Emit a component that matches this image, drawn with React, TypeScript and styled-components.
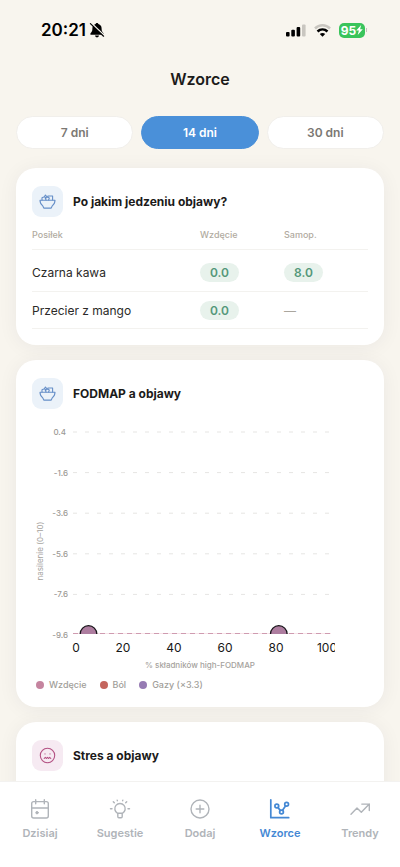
import React, { useState } from "react";
import styled, { createGlobalStyle } from "styled-components";

const GlobalStyle = createGlobalStyle`
  *, *::before, *::after { box-sizing: border-box; }
  body {
    margin: 0;
    background: #f8f5ee;
    color: #1c1b1a;
    font-family: Inter, "Liberation Sans", sans-serif;
    -webkit-font-smoothing: antialiased;
  }
  button { font: inherit; }
`;

const Screen = styled.div`
  display: flex;
  flex-direction: column;
  height: 100vh;
  overflow: hidden;
`;

const StatusBar = styled.div`
  display: flex;
  flex: none;
  align-items: center;
  justify-content: space-between;
  height: 60px;
  padding: 0 33px 0 41px;
  color: #000;
`;

const Clock = styled.div`
  display: flex;
  align-items: center;
  gap: 3px;
  font-size: 17px;
  font-weight: 600;
`;

const StatusIcons = styled.div`
  display: flex;
  align-items: center;
  gap: 8px;
`;

const Battery = styled.span`
  display: flex;
  align-items: center;
  gap: 1px;
`;

const BatteryBody = styled.span`
  display: flex;
  align-items: center;
  justify-content: center;
  width: 26px;
  height: 15px;
  border-radius: 5px;
  background: #3ac45b;
  color: #fff;
  font-size: 12px;
  font-weight: 700;
`;

const BatteryTip = styled.span`
  width: 1px;
  height: 4px;
  background: #c4c2bd;
`;

const PageTitle = styled.h1`
  flex: none;
  margin: 0;
  padding: 7px 16px 1px;
  font-size: 16px;
  font-weight: 600;
  line-height: 24px;
  text-align: center;
`;

const Content = styled.main`
  flex: 1;
  min-height: 0;
  overflow: auto;
  scrollbar-width: none;
  padding: 24px 16px 16px;
`;

const Periods = styled.div`
  display: grid;
  grid-template-columns: repeat(3, 1fr);
  gap: 8px;
  margin-bottom: 19px;
`;

const PeriodButton = styled.button<{ $active: boolean }>`
  height: 33px;
  padding: 0;
  border: 1px solid ${(p) => (p.$active ? "#4a90d9" : "#f1efeb")};
  border-radius: 17px;
  background: ${(p) => (p.$active ? "#4a90d9" : "#fff")};
  color: ${(p) => (p.$active ? "#fff" : "#7b7873")};
  font-size: 12px;
  font-weight: 600;
  cursor: pointer;
`;

const Cards = styled.div`
  display: flex;
  flex-direction: column;
  gap: 15px;
`;

const Card = styled.section`
  padding: 18px 16px 16px;
  border-radius: 20px;
  background: #fff;
  box-shadow: 0 2px 20px rgba(40, 40, 60, 0.06);
`;

const CardHeader = styled.header`
  display: flex;
  align-items: center;
  gap: 10px;
`;

const IconTile = styled.span<{ $tone: "blue" | "pink" }>`
  display: grid;
  place-items: center;
  width: 31px;
  height: 31px;
  border-radius: 9px;
  background: ${(p) => (p.$tone === "blue" ? "#ebf2f9" : "#f6eaf2")};
  color: ${(p) => (p.$tone === "blue" ? "#668fc8" : "#b35183")};
`;

const CardTitle = styled.h2`
  margin: 0;
  font-size: 12px;
  font-weight: 700;
  line-height: 16px;
`;

const MealTable = styled.table`
  width: 100%;
  margin-top: 8px;
  border-collapse: collapse;
  table-layout: fixed;

  th, td {
    padding: 0;
    border-bottom: 1px solid #f3f2ef;
    text-align: left;
  }
  thead th {
    height: 24px;
    padding-bottom: 4px;
    color: #b1ab9f;
    font-size: 9px;
    font-weight: 500;
  }
  thead th:first-child { width: 50%; }
  tbody::before {
    content: "";
    display: block;
    height: 5px;
  }
  tbody th, tbody td {
    height: 37px;
    color: #2b2a28;
    font-size: 12px;
    font-weight: 400;
  }
`;

const Score = styled.span`
  display: inline-block;
  width: 39px;
  border-radius: 10px;
  background: #e8f2ec;
  color: #54987a;
  font-size: 12px;
  font-weight: 600;
  line-height: 19px;
  text-align: center;
  vertical-align: middle;
`;

const Missing = styled.span`
  color: #aaa69e;
`;

const Plot = styled.svg`
  display: block;
  width: 100%;
  height: auto;
  margin-top: 11px;
  font-family: Inter, "Liberation Sans", sans-serif;
`;

const Legend = styled.ul`
  display: flex;
  gap: 13px;
  margin: 0;
  padding: 7px 4px 0;
  list-style: none;
`;

const LegendItem = styled.li<{ $color: string }>`
  display: flex;
  align-items: center;
  gap: 5px;
  color: #a19e99;
  font-size: 9px;
  font-weight: 500;
  line-height: 12px;

  &::before {
    content: "";
    width: 8px;
    height: 8px;
    border-radius: 50%;
    background: ${(p) => p.$color};
  }
`;

const StressBody = styled.div`
  height: 220px;
`;

const TabBar = styled.nav`
  display: grid;
  flex: none;
  grid-template-columns: repeat(5, 1fr);
  height: 86px;
  padding-top: 16px;
  border-top: 1px solid #f3f2f0;
  background: #fff;
`;

const Tab = styled.button<{ $active: boolean }>`
  display: flex;
  flex-direction: column;
  align-items: center;
  align-self: start;
  gap: 5px;
  padding: 0;
  border: 0;
  background: none;
  color: ${(p) => (p.$active ? "#4488d4" : "#b0b4b9")};
  font-size: 11px;
  font-weight: 600;
  line-height: 16px;
  cursor: pointer;
`;

const MutedBell = () => (
  <svg width="16" height="16" viewBox="0 0 16 16" aria-label="Wyciszony">
    <path d="M8 1C7.200 1 6.700 1.500 6.600 2.100C4.400 2.700 3.400 4.400 3.400 6.400c0 2.700-.7 3.300-1.700 4.500-.7.800-.4 1.900.5 1.900h11.600c.9 0 1.200-1.100.500-1.900-1-1.200-1.700-1.800-1.700-4.500 0-2-1-3.700-3.200-4.300C9.300 1.500 8.800 1 8 1zM6 13.600a2 1.800 0 0 0 4 0z" fill="#000" />
    <path d="M2.200 1 15.400 13.600" stroke="#f8f5ee" strokeWidth="1.500" />
    <path d="M1.400 1.600 14.600 14.200" stroke="#000" strokeWidth="1.200" strokeLinecap="round" />
  </svg>
);

const Signal = () => (
  <svg width="20" height="13" viewBox="0 0 20 13" aria-label="Sygnał">
    <rect x="0" y="8" width="3.600" height="4.500" rx="1" />
    <rect x="5.300" y="5.800" width="3.600" height="6.700" rx="1" />
    <rect x="10.600" y="3" width="3.600" height="9.500" rx="1" />
    <rect x="16" y="0.500" width="3.600" height="12" rx="1" fill="#c9c6c0" />
  </svg>
);

const Wifi = () => (
  <svg width="17" height="13" viewBox="0 0 17 13" fill="none" aria-label="Wi-Fi">
    <path d="M1 4.500C5.200.300 11.800.300 16 4.500" stroke="#c9c6c0" strokeWidth="2.500" />
    <path d="M3.500 7.500c2.900-2.700 7.100-2.700 10 0" stroke="#000" strokeWidth="2.500" />
    <path d="M8.500 12.800 5.800 10.100c1.500-1.400 3.900-1.400 5.400 0z" fill="#000" />
  </svg>
);

const Bolt = () => (
  <svg width="7" height="10" viewBox="0 0 7 10" fill="#fff" aria-hidden="true">
    <path d="M5.200 0 .200 5.600h2.700L1.700 10l5.100-5.800H4.100z" />
  </svg>
);

const Bowl = () => (
  <svg width="17" height="17" viewBox="0 0 17 17" fill="none" stroke="currentColor" strokeWidth="1.100" strokeLinecap="round" strokeLinejoin="round" aria-hidden="true">
    <path d="M1 7.300h15c0 2.200-.9 4.200-2.800 5.600l-1 2.200H4.800l-1-2.200C1.900 11.500 1 9.500 1 7.300z" />
    <path d="M3 7V4.700l2.400-.9 1.700 1.200M5.400 3.800 6.400 2 8 3.800M7.100 7 6.300 5.500l2.200-1.400 1.800.9-.7 2M8.900 3.900V3h4.700v4" />
  </svg>
);

const SadFace = () => (
  <svg width="17" height="17" viewBox="0 0 17 17" fill="none" stroke="currentColor" strokeWidth="1.100" strokeLinecap="round" strokeLinejoin="round" aria-hidden="true">
    <circle cx="8.500" cy="8.500" r="7.200" />
    <path d="M6 6.700v.2M11 6.700v.2M5.200 11.500l1.100-1.200 1.100 1.200 1.100-1.200 1.100 1.200 1.100-1.200 1.100 1.200" />
  </svg>
);

const iconProps = {
  width: 22,
  height: 22,
  viewBox: "0 0 22 22",
  fill: "none",
  stroke: "currentColor",
  strokeWidth: 1.4,
  strokeLinecap: "round" as const,
  strokeLinejoin: "round" as const,
  "aria-hidden": true,
};

const CalendarIcon = () => (
  <svg {...iconProps}>
    <rect x="2.700" y="3.600" width="16.600" height="16.400" rx="2" />
    <path d="M2.700 10h16.600M6.700 1.800v4M15.300 1.800v4" />
    <circle cx="8" cy="14.700" r="1.200" fill="currentColor" strokeWidth="1" />
  </svg>
);

const BulbIcon = () => (
  <svg {...iconProps}>
    <path d="M8.600 15.300a5.200 5.200 0 1 1 4.800 0zM8.800 15.300v3.200c0 .8.400 1.200 1.100 1.200h2.200c.7 0 1.100-.4 1.100-1.200v-3.200" />
    <path d="M1.500 10.700h1.500M19 10.700h1.500M4.300 3.700l1 1.100M17.700 3.700l-1 1.100M8.200 2.100l.2.600M13.800 2.100l-.2.600" />
  </svg>
);

const AddIcon = () => (
  <svg {...iconProps}>
    <circle cx="11" cy="11" r="9" />
    <path d="M11 7.200v7.600M7.200 11h7.600" />
  </svg>
);

const PatternsIcon = () => (
  <svg {...iconProps} strokeWidth={1.700}>
    <path d="M1.800 1.800v17.900h17.900" />
    <circle cx="7.800" cy="8" r="1.900" />
    <circle cx="12.500" cy="14" r="1.900" />
    <circle cx="17.600" cy="6.300" r="1.900" />
    <path d="m9 9.600 2.300 2.800M13.500 12.300l3-4.300" />
  </svg>
);

const TrendIcon = () => (
  <svg {...iconProps}>
    <path d="m2 16.200 6-6.100 4.300 4.200 8-8.200M12.800 6.100h7.500v6.500" />
  </svg>
);

const meals = [
  { name: "Czarna kawa", bloating: "0.0", mood: "8.0" },
  { name: "Przecier z mango", bloating: "0.0", mood: null },
];

const yTicks = ["0.4", "-1.6", "-3.6", "-5.6", "-7.6", "-9.6"];
const xTicks = [0, 20, 40, 60, 80, 100];
const tickGap = 40.6;
const plotLeft = 41;
const plotRight = 302;
const baseline = 214;

const FodmapPlot = () => (
  <Plot viewBox="0 0 336 252" role="img" aria-label="FODMAP a objawy">
    <defs>
      <clipPath id="plot-area"><rect x={plotLeft} y="0" width={plotRight - plotLeft} height={baseline} /></clipPath>
      <clipPath id="axis-area"><rect x="0" y={baseline} width="303" height="30" /></clipPath>
    </defs>
    {yTicks.map((tick, i) => (
      <g key={tick}>
        <text x={i === 0 ? 34 : 36} y={15 + i * tickGap} textAnchor="end" fontSize="8" fontWeight="500" fill="#9c9995">{tick}</text>
        {i < 5 && (
          <path d={`M${plotLeft} ${12 + i * tickGap}H${plotRight}`} stroke="#e6e5e3" strokeDasharray="4 8" />
        )}
      </g>
    ))}
    <path d={`M${plotLeft} 213.500H${plotRight - 3}`} stroke="#f8e4e9" />
    <path d={`M${plotLeft} 213.500H${plotRight - 3}`} stroke="#cf9bb0" strokeDasharray="5 4" />
    <g clipPath="url(#plot-area)" fill="#ad7d9f" stroke="#18151a" strokeWidth="1.300">
      <circle cx="56.500" cy="214" r="8.300" />
      <circle cx="246.800" cy="214" r="8.300" />
    </g>
    <g clipPath="url(#axis-area)" fontSize="12" fill="#171717" textAnchor="middle">
      {xTicks.map((tick, i) => (
        <text key={tick} x={(i === 0 ? 44 : 40) + i * 51} y="232">{tick}</text>
      ))}
    </g>
    <text x="168" y="248" textAnchor="middle" fontSize="8" fontWeight="500" fill="#a5a29d">% składników high-FODMAP</text>
    <text transform="translate(11 131) rotate(-90)" textAnchor="middle" fontSize="8" fill="#a5a29d">nasilenie (0–10)</text>
  </Plot>
);

const tabs = [
  { label: "Dzisiaj", icon: <CalendarIcon /> },
  { label: "Sugestie", icon: <BulbIcon /> },
  { label: "Dodaj", icon: <AddIcon /> },
  { label: "Wzorce", icon: <PatternsIcon /> },
  { label: "Trendy", icon: <TrendIcon /> },
];

const periods = ["7 dni", "14 dni", "30 dni"];

export default function App() {
  const [period, setPeriod] = useState("14 dni");
  const [tab, setTab] = useState("Wzorce");

  return (
    <Screen>
      <GlobalStyle />
      <StatusBar>
        <Clock>20:21<MutedBell /></Clock>
        <StatusIcons>
          <Signal />
          <Wifi />
          <Battery>
            <BatteryBody>95<Bolt /></BatteryBody>
            <BatteryTip />
          </Battery>
        </StatusIcons>
      </StatusBar>
      <PageTitle>Wzorce</PageTitle>
      <Content>
        <Periods>
          {periods.map((p) => (
            <PeriodButton key={p} type="button" $active={p === period} aria-pressed={p === period} onClick={() => setPeriod(p)}>
              {p}
            </PeriodButton>
          ))}
        </Periods>
        <Cards>
          <Card>
            <CardHeader>
              <IconTile $tone="blue"><Bowl /></IconTile>
              <CardTitle>Po jakim jedzeniu objawy?</CardTitle>
            </CardHeader>
            <MealTable>
              <thead>
                <tr>
                  <th scope="col">Posiłek</th>
                  <th scope="col">Wzdęcie</th>
                  <th scope="col">Samop.</th>
                </tr>
              </thead>
              <tbody>
                {meals.map((meal) => (
                  <tr key={meal.name}>
                    <th scope="row">{meal.name}</th>
                    <td><Score>{meal.bloating}</Score></td>
                    <td>{meal.mood ? <Score>{meal.mood}</Score> : <Missing>—</Missing>}</td>
                  </tr>
                ))}
              </tbody>
            </MealTable>
          </Card>
          <Card>
            <CardHeader>
              <IconTile $tone="blue"><Bowl /></IconTile>
              <CardTitle>FODMAP a objawy</CardTitle>
            </CardHeader>
            <FodmapPlot />
            <Legend>
              <LegendItem $color="#c5849f">Wzdęcie</LegendItem>
              <LegendItem $color="#c4655d">Ból</LegendItem>
              <LegendItem $color="#967bb3">Gazy (×3.3)</LegendItem>
            </Legend>
          </Card>
          <Card>
            <CardHeader>
              <IconTile $tone="pink"><SadFace /></IconTile>
              <CardTitle>Stres a objawy</CardTitle>
            </CardHeader>
            <StressBody />
          </Card>
        </Cards>
      </Content>
      <TabBar>
        {tabs.map((t) => (
          <Tab key={t.label} type="button" $active={t.label === tab} aria-current={t.label === tab ? "page" : undefined} onClick={() => setTab(t.label)}>
            {t.icon}
            {t.label}
          </Tab>
        ))}
      </TabBar>
    </Screen>
  );
}
